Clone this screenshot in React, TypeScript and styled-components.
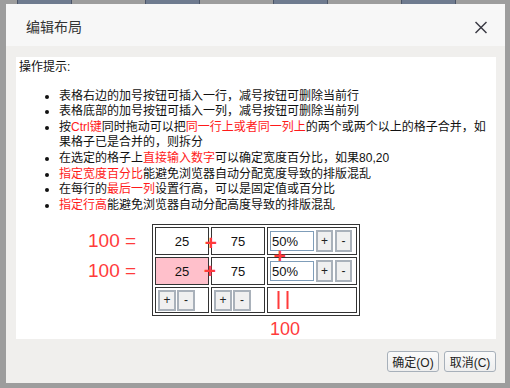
import React from "react";
import styled, { createGlobalStyle } from "styled-components";

const tips = [
  [{ t: "表格右边的加号按钮可插入一行，减号按钮可删除当前行" }],
  [{ t: "表格底部的加号按钮可插入一列，减号按钮可删除当前列" }],
  [
    { t: "按" },
    { t: "Ctrl键", red: true },
    { t: "同时拖动可以把" },
    { t: "同一行上或者同一列上", red: true },
    { t: "的两个或两个以上的格子合并，如果格子已是合并的，则拆分" },
  ],
  [
    { t: "在选定的格子上" },
    { t: "直接输入数字", red: true },
    { t: "可以确定宽度百分比，如果80,20" },
  ],
  [{ t: "指定宽度百分比", red: true }, { t: "能避免浏览器自动分配宽度导致的排版混乱" }],
  [{ t: "在每行的" }, { t: "最后一列", red: true }, { t: "设置行高，可以是固定值或百分比" }],
  [{ t: "指定行高", red: true }, { t: "能避免浏览器自动分配高度导致的排版混乱" }],
];

const Global = createGlobalStyle`
  body {
    margin: 0;
    background: #9d9d9d;
    font-family: "Liberation Sans", "Noto Sans CJK SC", sans-serif;
  }
`;

export default function App() {
  return (
    <>
      <Global />
      <Page>
        <Backdrop>
          {[0, 1, 2, 3].map((i) => (
            <Tile key={i} />
          ))}
        </Backdrop>
        <Dialog>
          <Header>
            <Title>编辑布局</Title>
            <Close viewBox="0 0 12 12">
              <path d="M0.5 0.5 L11.5 11.5 M11.5 0.5 L0.5 11.5" />
            </Close>
          </Header>
          <Body>
            <Panel>
              <Lead>操作提示:</Lead>
              <Tips>
                {tips.map((parts, i) => (
                  <li key={i}>
                    {parts.map((p, j) => (p.red ? <Red key={j}>{p.t}</Red> : <span key={j}>{p.t}</span>))}
                  </li>
                ))}
              </Tips>
              <Demo>
                <Labels>
                  <Label>100 =</Label>
                  <Label>100 =</Label>
                </Labels>
                <GridWrap>
                  <Grid>
                    <Cell>25</Cell>
                    <Cell>75</Cell>
                    <Cell $tools>
                      <Percent defaultValue="50%" />
                      <MiniBtn>+</MiniBtn>
                      <MiniBtn>-</MiniBtn>
                    </Cell>
                    <Cell $picked>25</Cell>
                    <Cell>75</Cell>
                    <Cell $tools>
                      <Percent defaultValue="50%" />
                      <MiniBtn>+</MiniBtn>
                      <MiniBtn>-</MiniBtn>
                    </Cell>
                    <Cell $tools $left>
                      <MiniBtn $short>+</MiniBtn>
                      <MiniBtn $short>-</MiniBtn>
                    </Cell>
                    <Cell $tools $left>
                      <MiniBtn $short>+</MiniBtn>
                      <MiniBtn $short>-</MiniBtn>
                    </Cell>
                    <Cell />
                  </Grid>
                  <Mark $x={59} $y={18}>+</Mark>
                  <Mark $x={58} $y={46}>+</Mark>
                  <Mark $x={128} $y={31}>+</Mark>
                  <Bars $x={131} $y={76} />
                  <Sum $x={133} $y={105}>100</Sum>
                </GridWrap>
              </Demo>
            </Panel>
            <Footer>
              <Action>确定(O)</Action>
              <Action>取消(C)</Action>
            </Footer>
          </Body>
        </Dialog>
      </Page>
    </>
  );
}

const Page = styled.div`
  width: 510px;
  height: 388px;
  overflow: hidden;
`;

const Backdrop = styled.div`
  display: flex;
  gap: 73px;
  padding-left: 17px;
  height: 4px;
  overflow: hidden;
`;

const Tile = styled.div`
  width: 55px;
  height: 20px;
  box-sizing: border-box;
  background: #6f7b8f;
  border: 1px solid #4b5568;
  margin-top: -10px;
`;

const Dialog = styled.div`
  margin-left: 6px;
  width: 499px;
  height: 379px;
  background: #f0efed;
  display: flex;
  flex-direction: column;
`;

const Header = styled.div`
  height: 42px;
  flex: none;
  background: #f7f7f7;
  display: flex;
  align-items: center;
  justify-content: space-between;
  padding: 0 18px 0 20px;
`;

const Title = styled.div`
  font-size: 14px;
  color: #333;
  margin-top: 2px;
`;

const Close = styled.svg`
  width: 12px;
  height: 13px;
  margin-top: 4px;
  fill: none;
  stroke: #3a3a44;
  stroke-width: 1.5;
`;

const Body = styled.div`
  flex: 1;
  padding: 11px 9px 0 10px;
  display: flex;
  flex-direction: column;
`;

const Panel = styled.div`
  height: 282px;
  box-sizing: border-box;
  background: #fff;
  padding: 3px 5px 0 3px;
  font-size: 12px;
  line-height: 15.6px;
  color: #111;
`;

const Lead = styled.div``;

const Tips = styled.ul`
  margin: 13px 0 0;
  padding-left: 40px;
  list-style: disc;
`;

const Red = styled.span`
  color: #ff1a1a;
`;

const Demo = styled.div`
  display: flex;
  margin-top: 11px;
  padding-left: 69px;
`;

const Labels = styled.div`
  width: 64px;
  padding-top: 3px;
  display: flex;
  flex-direction: column;
  gap: 2px;
`;

const Label = styled.div`
  height: 28px;
  line-height: 28px;
  font-size: 19px;
  color: #ff3b3b;
`;

const GridWrap = styled.div`
  position: relative;
`;

const Grid = styled.div`
  display: grid;
  grid-template-columns: 54px 54px 90px;
  grid-template-rows: 28px 28px 26px;
  gap: 2px;
  padding: 2px;
  border: 1px solid #333;
`;

const Cell = styled.div<{ $tools?: boolean; $left?: boolean; $picked?: boolean }>`
  box-sizing: border-box;
  border: 1px solid #333;
  background: ${(p) => (p.$picked ? "#ffc0cb" : "#fff")};
  display: flex;
  align-items: center;
  justify-content: ${(p) => (p.$tools ? "flex-start" : "center")};
  gap: ${(p) => (p.$left ? "1px" : "2px")};
  padding-left: ${(p) => (p.$tools ? "2px" : "0")};
  font-size: 13px;
  color: #111;
`;

const Percent = styled.input`
  width: 44px;
  height: 20px;
  box-sizing: border-box;
  border: 1px solid #7f9db9;
  padding: 0 1px;
  font: 13px "Liberation Sans", sans-serif;
  color: #111;
  outline: none;
`;

const MiniBtn = styled.button<{ $short?: boolean }>`
  width: ${(p) => (p.$short ? "18px" : "17px")};
  height: ${(p) => (p.$short ? "21px" : "22px")};
  box-sizing: border-box;
  border: 2px solid #a9b1ba;
  border-radius: 0;
  background: #f0f0f0;
  padding: 0;
  font: 12px "Liberation Sans", sans-serif;
  color: #222;
  line-height: 1;
`;

const Overlay = styled.span<{ $x: number; $y: number }>`
  position: absolute;
  left: ${(p) => p.$x}px;
  top: ${(p) => p.$y}px;
  transform: translate(-50%, -50%);
  color: #ff3b3b;
  line-height: 1;
  pointer-events: none;
`;

const Mark = styled(Overlay)`
  font-size: 21px;
  font-weight: bold;
`;

const Bars = styled(Overlay)`
  width: 7px;
  height: 18px;
  border-left: 2px solid #ff3b3b;
  border-right: 2px solid #ff3b3b;
`;

const Sum = styled(Overlay)`
  font-size: 18px;
`;

const Footer = styled.div`
  display: flex;
  justify-content: flex-end;
  gap: 5px;
  margin-top: 12px;
`;

const Action = styled.button`
  width: 52px;
  height: 21px;
  padding: 0;
  box-sizing: border-box;
  border: 1px solid #a7b0ba;
  border-radius: 3px;
  background: linear-gradient(#fafafa, #eeeeee);
  font: 12px "Liberation Sans", "Noto Sans CJK SC", sans-serif;
  color: #222;
`;
